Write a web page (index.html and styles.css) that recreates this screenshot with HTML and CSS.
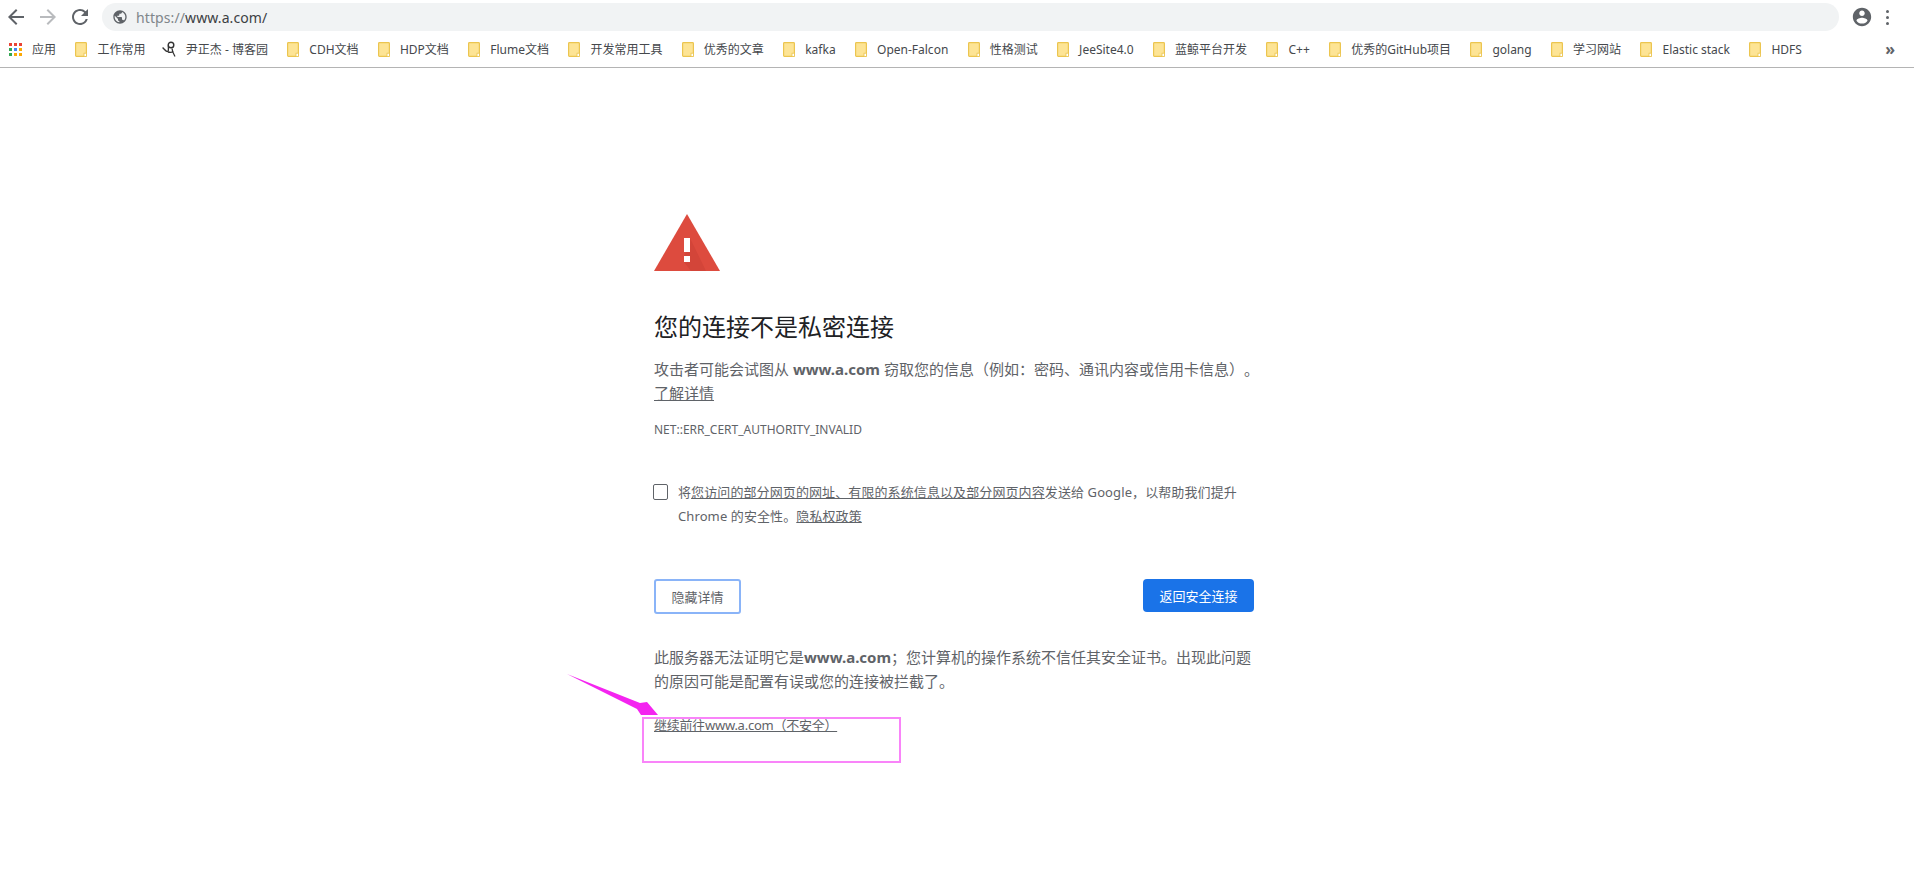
FILE: index.html
```html
<!DOCTYPE html>
<html lang="zh-CN">
<head>
    <meta charset="UTF-8">
    <title>隐私设置错误</title>
    <link rel="stylesheet" href="styles.css">
</head>
<body>
    <svg class="defs" width="0" height="0">
        <symbol id="folder" viewBox="0 0 12 15">
            <rect x=".6" y=".6" width="10.8" height="13.8" rx=".8" fill="#fde495" stroke="#ecc54f" stroke-width="1.2"/>
            <rect x="9" y="11.2" width="2.4" height="3.2" fill="#fff" stroke="#ecc54f" stroke-width=".8"/>
        </symbol>
    </svg>

    <header class="toolbar">
        <svg class="nav-icon" viewBox="0 0 24 24"><path d="M20 11H7.83l5.59-5.59L12 4l-8 8 8 8 1.41-1.41L7.83 13H20v-2z"/></svg>
        <svg class="nav-icon nav-disabled" viewBox="0 0 24 24"><path d="M12 4l-1.41 1.41L16.17 11H4v2h12.17l-5.58 5.59L12 20l8-8z"/></svg>
        <svg class="nav-icon" viewBox="0 0 24 24"><path d="M17.65 6.35A7.958 7.958 0 0 0 12 4c-4.42 0-7.99 3.58-7.99 8s3.57 8 7.99 8c3.73 0 6.84-2.55 7.73-6h-2.08A5.99 5.99 0 0 1 12 18c-3.31 0-6-2.69-6-6s2.69-6 6-6c1.66 0 3.14.69 4.22 1.78L13 11h7V4l-2.35 2.35z"/></svg>
        <div class="omnibox">
            <svg class="globe" viewBox="0 0 24 24"><path d="M12 2C6.48 2 2 6.48 2 12s4.48 10 10 10 10-4.48 10-10S17.52 2 12 2zm-1 17.93c-3.95-.49-7-3.85-7-7.93 0-.62.08-1.21.21-1.79L9 15v1c0 1.1.9 2 2 2v1.93zm6.9-2.54c-.26-.81-1-1.39-1.9-1.39h-1v-3c0-.55-.45-1-1-1H8v-2h2c.55 0 1-.45 1-1V7h2c1.1 0 2-.9 2-2v-.41c2.93 1.19 5 4.06 5 7.41 0 2.08-.8 3.97-2.1 5.39z"/></svg>
            <span class="url"><span class="url-scheme">https://</span>www.a.com/</span>
        </div>
        <svg class="profile" viewBox="0 0 24 24"><path d="M12 2C6.48 2 2 6.48 2 12s4.48 10 10 10 10-4.48 10-10S17.52 2 12 2zm0 3c1.66 0 3 1.34 3 3s-1.34 3-3 3-3-1.34-3-3 1.34-3 3-3zm0 14.2c-2.5 0-4.71-1.28-6-3.22.03-1.99 4-3.08 6-3.08 1.99 0 5.97 1.09 6 3.08-1.29 1.94-3.5 3.22-6 3.22z"/></svg>
        <div class="menu-dots"><i></i><i></i><i></i></div>
    </header>

    <nav class="bookmarks">
        <div class="bookmark">
            <div class="apps">
                <i class="red"></i><i class="red"></i><i class="red"></i>
                <i class="green"></i><i class="blue"></i><i class="yellow"></i>
                <i class="green"></i><i class="yellow"></i><i class="yellow"></i>
            </div>
            <span>应用</span>
        </div>
        <div class="bookmark"><svg class="folder"><use href="#folder"/></svg><span>工作常用</span></div>
        <div class="bookmark bookmark-blog">
            <svg class="favicon" viewBox="0 0 14 16">
                <path d="M.6 6.5C2 8 4 10.5 5.5 10.5 7 10.5 6 7 6.5 4.5" fill="none" stroke="#333" stroke-width="1.3"/>
                <circle cx="9" cy="4" r="2.8" fill="none" stroke="#333" stroke-width="1.4"/>
                <path d="M10 7.5c.2 3 1.5 5.5 3 8M6 11c2 .5 4 .5 5.5-.5" fill="none" stroke="#333" stroke-width="1.3"/>
            </svg>
            <span>尹正杰 - 博客园</span>
        </div>
        <div class="bookmark"><svg class="folder"><use href="#folder"/></svg><span>CDH文档</span></div>
        <div class="bookmark"><svg class="folder"><use href="#folder"/></svg><span>HDP文档</span></div>
        <div class="bookmark"><svg class="folder"><use href="#folder"/></svg><span>Flume文档</span></div>
        <div class="bookmark"><svg class="folder"><use href="#folder"/></svg><span>开发常用工具</span></div>
        <div class="bookmark"><svg class="folder"><use href="#folder"/></svg><span>优秀的文章</span></div>
        <div class="bookmark"><svg class="folder"><use href="#folder"/></svg><span>kafka</span></div>
        <div class="bookmark"><svg class="folder"><use href="#folder"/></svg><span>Open-Falcon</span></div>
        <div class="bookmark"><svg class="folder"><use href="#folder"/></svg><span>性格测试</span></div>
        <div class="bookmark"><svg class="folder"><use href="#folder"/></svg><span>JeeSite4.0</span></div>
        <div class="bookmark"><svg class="folder"><use href="#folder"/></svg><span>蓝鲸平台开发</span></div>
        <div class="bookmark"><svg class="folder"><use href="#folder"/></svg><span>C++</span></div>
        <div class="bookmark"><svg class="folder"><use href="#folder"/></svg><span>优秀的GitHub项目</span></div>
        <div class="bookmark"><svg class="folder"><use href="#folder"/></svg><span>golang</span></div>
        <div class="bookmark"><svg class="folder"><use href="#folder"/></svg><span>学习网站</span></div>
        <div class="bookmark"><svg class="folder"><use href="#folder"/></svg><span>Elastic stack</span></div>
        <div class="bookmark"><svg class="folder"><use href="#folder"/></svg><span>HDFS</span></div>
        <span class="more">»</span>
    </nav>

    <main class="interstitial">
        <svg class="warning" viewBox="0 0 66 57">
            <polygon points="33,0 66,57 0,57" fill="#dd4b3e"/>
            <polygon points="36,24 52,57 37,57 30,48 30,42 32,38" fill="#d34539"/>
            <rect x="30" y="24" width="6" height="14" fill="#fff"/>
            <rect x="30" y="42" width="6" height="6" fill="#fff"/>
        </svg>
        <h1>您的连接不是私密连接</h1>
        <p class="message">攻击者可能会试图从 <strong>www.a.com</strong> 窃取您的信息（例如：密码、通讯内容或信用卡信息）。<a href="#" class="learn-more">了解详情</a></p>
        <div class="error-code">NET::ERR_CERT_AUTHORITY_INVALID</div>

        <div class="opt-in">
            <span class="checkbox"></span>
            <p>将<a href="#">您访问的部分网页的网址、有限的系统信息以及部分网页内容</a>发送给 Google，以帮助我们提升 Chrome 的安全性。<a href="#">隐私权政策</a></p>
        </div>

        <div class="actions">
            <button class="btn-details">隐藏详情</button>
            <button class="btn-primary">返回安全连接</button>
        </div>

        <p class="details">此服务器无法证明它是<strong>www.a.com</strong>；您计算机的操作系统不信任其安全证书。出现此问题的原因可能是配置有误或您的连接被拦截了。</p>
        <a href="#" class="proceed">继续前往www.a.com（不安全）</a>
    </main>

    <!-- annotation drawn over the screenshot -->
    <div class="mark-box"></div>
    <svg class="mark-arrow" viewBox="0 0 100 50"><polygon points="1,1 74,30 81,29 92,42 75,42 71,36" fill="#f424f0"/></svg>
</body>
</html>
```

FILE: styles.css
```css
* {
    margin: 0;
    padding: 0;
    box-sizing: border-box;
}

body {
    background: #fff;
    font-family: "Noto Sans", "Noto Sans CJK SC", sans-serif;
    color: #5f6368;
    height: 877px;
    overflow: hidden;
    position: relative;
    text-spacing-trim: space-all;
}

.defs {
    position: absolute;
}

.toolbar {
    display: flex;
    align-items: center;
    height: 34px;
    padding: 0 25px 0 4px;
}

.nav-icon {
    width: 24px;
    height: 24px;
    margin-right: 8px;
    fill: #5f6368;
}

.nav-disabled {
    fill: #b9bbbe;
}

.omnibox {
    flex: 1;
    display: flex;
    align-items: center;
    height: 28px;
    margin-left: 2px;
    padding-left: 10px;
    background: #f1f3f4;
    border-radius: 14px;
}

.globe {
    width: 16px;
    height: 16px;
    fill: #5f6368;
    margin-right: 8px;
}

.url {
    font-size: 14px;
    letter-spacing: 0.1px;
    color: #3c4043;
}

.url-scheme {
    color: #80868b;
}

.profile {
    width: 22px;
    height: 22px;
    margin-left: 12px;
    fill: #5f6368;
}

.menu-dots {
    display: flex;
    flex-direction: column;
    gap: 3px;
    margin-left: 13px;
}

.menu-dots i {
    width: 3px;
    height: 3px;
    border-radius: 50%;
    background: #5f6368;
}

.bookmarks {
    display: flex;
    align-items: center;
    gap: 19.4px;
    height: 34px;
    padding: 0 19px 3px 9px;
    border-bottom: 1px solid #b4b4b4;
    font-size: 12px;
    color: #45484c;
}

.bookmark {
    display: flex;
    align-items: center;
    gap: 10px;
    white-space: nowrap;
}

.bookmark-blog {
    margin-left: -3px;
}

.apps {
    display: grid;
    grid-template-columns: repeat(3, 3px);
    gap: 2px;
}

.apps i {
    height: 3px;
}

.red { background: #ea4335; }
.blue { background: #4285f4; }
.yellow { background: #fba905; }
.green { background: #34a853; }

.folder {
    width: 12px;
    height: 15px;
}

.favicon {
    width: 14px;
    height: 16px;
}

.more {
    margin-left: auto;
    font-size: 16px;
    font-weight: 700;
    color: #5f6368;
}

.interstitial {
    width: 600px;
    margin-left: 654px;
    padding-top: 146px;
}

.warning {
    display: block;
    width: 66px;
    height: 57px;
}

h1 {
    margin-top: 40px;
    font-size: 24px;
    font-weight: 400;
    line-height: 32px;
    color: #202124;
}

.message {
    margin-top: 14px;
    margin-right: -20px;
    font-size: 15px;
    line-height: 24px;
}

.message strong,
.details strong {
    font-weight: 700;
}

a {
    color: #5f6368;
}

.learn-more {
    display: block;
}

.error-code {
    margin-top: 16px;
    font-size: 12px;
    line-height: 18px;
}

.opt-in {
    display: flex;
    gap: 10px;
    margin-top: 41px;
    margin-left: -1px;
    font-size: 13px;
    letter-spacing: 0.1px;
    line-height: 24px;
}

.checkbox {
    flex: none;
    width: 15px;
    height: 16px;
    margin-top: 4px;
    border: 1px solid #5f6368;
    border-radius: 2px;
}

.actions {
    display: flex;
    justify-content: space-between;
    align-items: flex-start;
    margin-top: 51px;
}

button {
    font: inherit;
    font-size: 13px;
    border-radius: 3px;
}

.btn-details {
    width: 87px;
    height: 35px;
    background: #fff;
    color: #5f6368;
    border: 2px solid #8ab4f8;
}

.btn-primary {
    width: 111px;
    height: 33px;
    background: #1a73e8;
    color: #fff;
    border: none;
    border-radius: 4px;
}

.details {
    margin-top: 31px;
    font-size: 15px;
    line-height: 24px;
}

.proceed {
    display: block;
    margin-top: 22px;
    font-size: 13px;
    letter-spacing: -0.25px;
    line-height: 20px;
}

.mark-box {
    position: absolute;
    left: 642px;
    top: 717px;
    width: 259px;
    height: 46px;
    border: 2px solid #f984f9;
}

.mark-arrow {
    position: absolute;
    left: 566px;
    top: 673px;
    width: 100px;
    height: 50px;
}
```
